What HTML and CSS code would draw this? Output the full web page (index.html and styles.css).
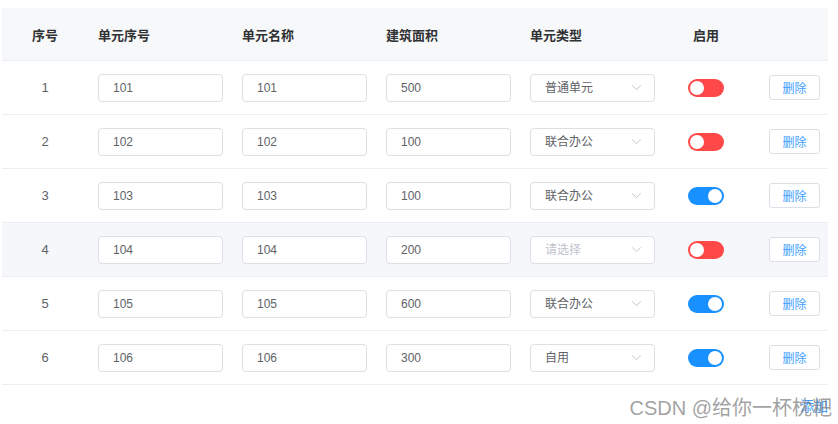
FILE: index.html
```html
<!DOCTYPE html>
<html lang="zh">
<head>
<meta charset="utf-8">
<link rel="stylesheet" href="styles.css">
</head>
<body>
<div class="wrap">
  <table class="grid">
    <colgroup>
      <col class="c-idx"><col class="c-w"><col class="c-w"><col class="c-w"><col class="c-w"><col class="c-sw"><col class="c-op">
    </colgroup>
    <thead>
      <tr>
        <th class="center">序号</th>
        <th>单元序号</th>
        <th>单元名称</th>
        <th>建筑面积</th>
        <th>单元类型</th>
        <th class="center">启用</th>
        <th></th>
      </tr>
    </thead>
    <tbody>
      <tr>
        <td class="center">1</td>
        <td><div class="input">101</div></td>
        <td><div class="input">101</div></td>
        <td><div class="input">500</div></td>
        <td><div class="input select"><span>普通单元</span><svg class="arrow" viewBox="0 0 12 8"><path d="M1 1.5 L6 6.5 L11 1.5" fill="none" stroke="#c0c4cc" stroke-width="1.1"/></svg></div></td>
        <td class="center"><span class="switch off"><i></i></span></td>
        <td class="op"><button class="del">删除</button></td>
      </tr>
      <tr>
        <td class="center">2</td>
        <td><div class="input">102</div></td>
        <td><div class="input">102</div></td>
        <td><div class="input">100</div></td>
        <td><div class="input select"><span>联合办公</span><svg class="arrow" viewBox="0 0 12 8"><path d="M1 1.5 L6 6.5 L11 1.5" fill="none" stroke="#c0c4cc" stroke-width="1.1"/></svg></div></td>
        <td class="center"><span class="switch off"><i></i></span></td>
        <td class="op"><button class="del">删除</button></td>
      </tr>
      <tr>
        <td class="center">3</td>
        <td><div class="input">103</div></td>
        <td><div class="input">103</div></td>
        <td><div class="input">100</div></td>
        <td><div class="input select"><span>联合办公</span><svg class="arrow" viewBox="0 0 12 8"><path d="M1 1.5 L6 6.5 L11 1.5" fill="none" stroke="#c0c4cc" stroke-width="1.1"/></svg></div></td>
        <td class="center"><span class="switch on"><i></i></span></td>
        <td class="op"><button class="del">删除</button></td>
      </tr>
      <tr class="hover">
        <td class="center">4</td>
        <td><div class="input">104</div></td>
        <td><div class="input">104</div></td>
        <td><div class="input">200</div></td>
        <td><div class="input select"><span class="ph">请选择</span><svg class="arrow" viewBox="0 0 12 8"><path d="M1 1.5 L6 6.5 L11 1.5" fill="none" stroke="#c0c4cc" stroke-width="1.1"/></svg></div></td>
        <td class="center"><span class="switch off"><i></i></span></td>
        <td class="op"><button class="del">删除</button></td>
      </tr>
      <tr>
        <td class="center">5</td>
        <td><div class="input">105</div></td>
        <td><div class="input">105</div></td>
        <td><div class="input">600</div></td>
        <td><div class="input select"><span>联合办公</span><svg class="arrow" viewBox="0 0 12 8"><path d="M1 1.5 L6 6.5 L11 1.5" fill="none" stroke="#c0c4cc" stroke-width="1.1"/></svg></div></td>
        <td class="center"><span class="switch on"><i></i></span></td>
        <td class="op"><button class="del">删除</button></td>
      </tr>
      <tr>
        <td class="center">6</td>
        <td><div class="input">106</div></td>
        <td><div class="input">106</div></td>
        <td><div class="input">300</div></td>
        <td><div class="input select"><span>自用</span><svg class="arrow" viewBox="0 0 12 8"><path d="M1 1.5 L6 6.5 L11 1.5" fill="none" stroke="#c0c4cc" stroke-width="1.1"/></svg></div></td>
        <td class="center"><span class="switch on"><i></i></span></td>
        <td class="op"><button class="del">删除</button></td>
      </tr>
    </tbody>
  </table>
  <div class="footer">
    <a class="add">添加</a>
    <span class="watermark">CSDN @给你一杯枕粑</span>
  </div>
</div>
</body>
</html>
```
FILE: styles.css
```css
html, body {
  margin: 0;
  padding: 0;
  background: #ffffff;
}
body {
  font-family: "Liberation Sans", "Noto Sans CJK SC", sans-serif;
  color: #606266;
}
.wrap {
  width: 826px;
  margin: 8px 0 0 2px;
}
.grid {
  width: 826px;
  border-collapse: collapse;
  table-layout: fixed;
}
.c-idx { width: 86px; }
.c-w { width: 144px; }
.c-sw { width: 84px; }
.c-op { width: 80px; }
.grid th {
  height: 52px;
  background: #f7f8fa;
  border-bottom: 1px solid #ebeef5;
  text-align: left;
  padding: 0 0 0 10px;
  font-size: 13px;
  font-weight: bold;
  color: #303133;
}
.grid td {
  height: 53px;
  border-bottom: 1px solid #ebeef5;
  padding: 0 0 0 10px;
  font-size: 13px;
  color: #606266;
}
.grid th.center, .grid td.center {
  text-align: center;
  padding: 0;
}
.grid tr.hover td {
  background: #f5f7fa;
}
.grid td.op {
  padding-left: 21px;
}
.input {
  box-sizing: border-box;
  width: 125px;
  height: 28px;
  border: 1px solid #dcdfe6;
  border-radius: 4px;
  background: #ffffff;
  padding: 0 14px;
  font-size: 12px;
  line-height: 26px;
  color: #606266;
}
.select {
  display: flex;
  align-items: center;
  justify-content: space-between;
  padding-right: 12px;
}
.select .ph {
  color: #c0c4cc;
}
.arrow {
  width: 11px;
  height: 7px;
}
.switch {
  display: inline-block;
  position: relative;
  width: 36px;
  height: 18px;
  border-radius: 9px;
  vertical-align: middle;
}
.switch i {
  position: absolute;
  top: 2px;
  width: 14px;
  height: 14px;
  border-radius: 50%;
  background: #ffffff;
}
.switch.off { background: #ff4949; }
.switch.off i { left: 2px; }
.switch.on { background: #1890ff; }
.switch.on i { right: 2px; }
.del {
  box-sizing: border-box;
  width: 51px;
  height: 25px;
  border: 1px solid #dcdfe6;
  border-radius: 3px;
  background: #ffffff;
  color: #409eff;
  font-family: "Liberation Sans", "Noto Sans CJK SC", sans-serif;
  font-size: 12px;
  padding: 0;
}
.footer {
  position: relative;
  height: 39px;
  display: flex;
  justify-content: flex-end;
  align-items: center;
}
.add {
  color: #409eff;
  font-size: 14px;
}
.watermark {
  position: absolute;
  right: -4px;
  top: 7px;
  font-size: 20px;
  color: rgba(120, 120, 120, 0.7);
  white-space: nowrap;
}
```
